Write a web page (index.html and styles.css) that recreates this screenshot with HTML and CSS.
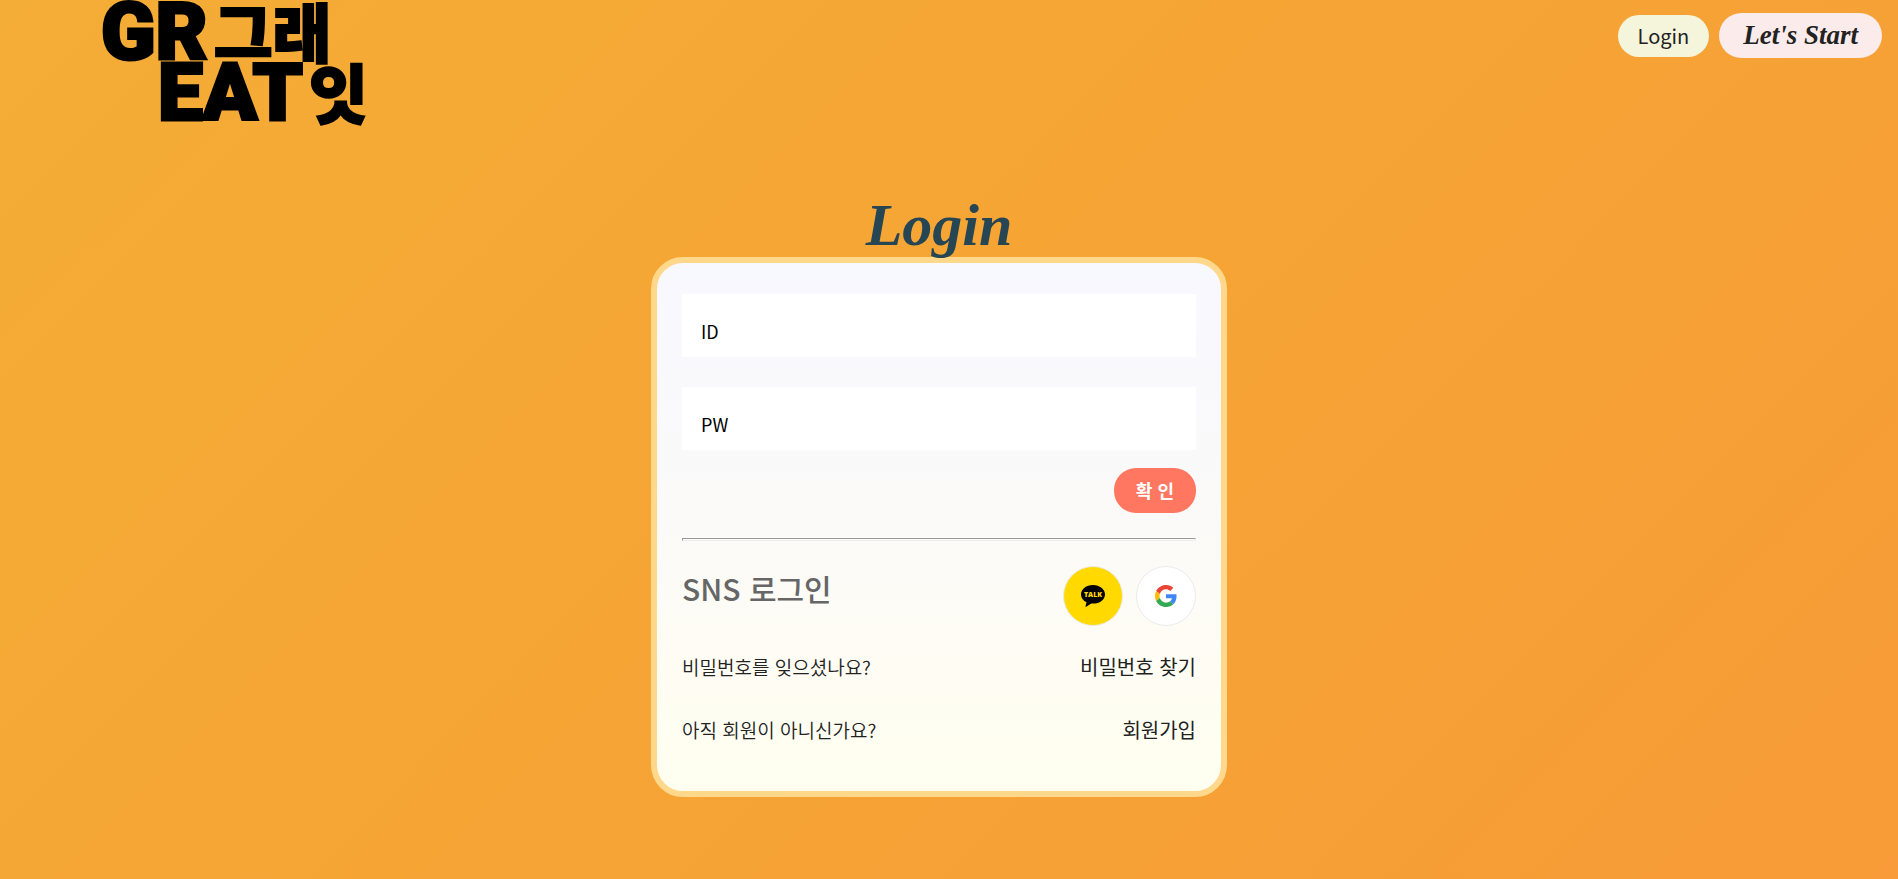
FILE: index.html
```html
<!DOCTYPE html>
<html lang="ko">
<head>
<meta charset="utf-8">
<title>GREAT 그래잇 - Login</title>
<link rel="stylesheet" href="styles.css">
</head>
<body>
<header class="header">
  <a class="logo" href="#" aria-label="GREAT 그래잇">
    <span class="logo-row"><span class="logo-latin">GR</span><span class="logo-hangul">그래</span></span>
    <span class="logo-row logo-row-indent"><span class="logo-latin">EAT</span><span class="logo-hangul">잇</span></span>
  </a>
  <nav class="nav">
    <a class="pill pill-login" href="#">Login</a>
    <a class="pill pill-start" href="#">Let's Start</a>
  </nav>
</header>
<main class="main">
  <h1 class="title">Login</h1>
  <form class="card">
    <div class="field">
      <label class="field-label" for="user-id">ID</label>
      <input class="field-input" id="user-id" type="text">
    </div>
    <div class="field">
      <label class="field-label" for="user-pw">PW</label>
      <input class="field-input" id="user-pw" type="password">
    </div>
    <button class="submit" type="submit">확 인</button>
    <hr class="divider">
    <div class="sns">
      <h2 class="sns-title">SNS 로그인</h2>
      <div class="sns-links">
        <a class="sns-link sns-kakao" href="#" aria-label="Kakao">
          <svg width="24" height="22" viewBox="0 0 24 22">
            <path d="M12 0C5.300 0 0 4.200 0 9.400c0 3.300 2.200 6.300 5.500 7.900L4.500 21.300c-.1.500.3.600.7.400l5.100-3.200c.6.100 1.100.1 1.700.1 6.700 0 12-4.100 12-9.200S18.700 0 12 0z"/>
            <text class="talk" x="12" y="12" text-anchor="middle">TALK</text>
          </svg>
        </a>
        <a class="sns-link sns-google" href="#" aria-label="Google">
          <svg width="22" height="22" viewBox="0 0 48 48">
            <path fill="#ea4335" d="M24 9.500c3.540 0 6.710 1.220 9.210 3.600l6.850-6.850C35.900 2.380 30.470 0 24 0 14.620 0 6.510 5.380 2.560 13.220l7.980 6.190C12.430 13.720 17.740 9.500 24 9.500z"/>
            <path fill="#4285f4" d="M46.980 24.550c0-1.570-.15-3.090-.38-4.550H24v9.020h12.940c-.58 2.960-2.260 5.480-4.780 7.180l7.730 6c4.510-4.180 7.090-10.360 7.090-17.650z"/>
            <path fill="#fbbc05" d="M10.530 28.590A14.500 14.500 0 0 1 9.770 24c0-1.600.27-3.140.76-4.590l-7.980-6.190A23.900 23.900 0 0 0 0 24c0 3.880.92 7.540 2.560 10.780l7.970-6.190z"/>
            <path fill="#34a853" d="M24 48c6.480 0 11.930-2.130 15.890-5.810l-7.730-6c-2.150 1.450-4.920 2.300-8.160 2.300-6.260 0-11.570-4.220-13.470-9.910l-7.980 6.190C6.510 42.620 14.620 48 24 48z"/>
          </svg>
        </a>
      </div>
    </div>
    <div class="help">
      <span class="help-text">비밀번호를 잊으셨나요?</span>
      <a class="help-link" href="#">비밀번호 찾기</a>
    </div>
    <div class="help">
      <span class="help-text">아직 회원이 아니신가요?</span>
      <a class="help-link" href="#">회원가입</a>
    </div>
  </form>
</main>
</body>
</html>
```
FILE: styles.css
```css
* {
  box-sizing: border-box;
}

body {
  margin: 0;
  min-height: 100vh;
  font-family: "Noto Sans CJK KR", sans-serif;
  color: #222;
  background: linear-gradient(135deg, #f4ad36, #f6a535 45%, #f6a036 75%, #f89b38);
}

a {
  color: inherit;
  text-decoration: none;
}

.header {
  display: flex;
  justify-content: space-between;
  align-items: flex-start;
  padding: 0 16px 0 101px;
}

.logo {
  display: flex;
  flex-direction: column;
  padding-top: 2px;
  color: #000;
  font-weight: 900;
  line-height: 61px;
}

.logo-row {
  display: flex;
  align-items: flex-start;
  gap: 6px;
}

.logo-row-indent {
  padding-left: 57px;
}

.logo-latin {
  font-family: Roboto, sans-serif;
  font-size: 80px;
  -webkit-text-stroke: 3px #000;
}

.logo-hangul {
  font-size: 64px;
  line-height: 54px;
  -webkit-text-stroke: 2px #000;
}

.nav {
  display: flex;
  align-items: center;
  gap: 10px;
  padding-top: 13px;
}

.pill {
  border-radius: 24px;
}

.pill-login {
  padding: 6px 20px;
  font-size: 20px;
  font-weight: 400;
  line-height: 30px;
  background: #f5f5dc;
}

.pill-start {
  padding: 6px 24px;
  font-family: "Liberation Serif", serif;
  font-size: 27px;
  font-style: italic;
  font-weight: 700;
  line-height: 33px;
  background: #fbeceb;
}

.main {
  display: flex;
  flex-direction: column;
  align-items: center;
  padding: 61px 20px 60px 0;
}

.title {
  position: relative;
  z-index: 1;
  margin: 0 0 -8px;
  font-family: "Liberation Serif", serif;
  font-size: 60px;
  font-style: italic;
  font-weight: 700;
  line-height: 80px;
  color: #264653;
}

.card {
  display: flex;
  flex-direction: column;
  width: 100%;
  max-width: 576px;
  padding: 31px 25px 46px;
  border: 6px solid #ffd88c;
  border-radius: 32px;
  background: linear-gradient(#f8f8ff, #fbfaf8 50%, #fffdf3 80%, #fffff0);
}

.field {
  position: relative;
  margin-bottom: 30px;
}

.field + .field {
  margin-bottom: 18px;
}

.field-label {
  position: absolute;
  top: 24px;
  left: 19px;
  font-size: 18px;
  line-height: 27px;
  color: #000;
}

.field-input {
  display: block;
  width: 100%;
  height: 63px;
  padding: 20px 19px 8px;
  border: 0;
  font: inherit;
  background: #fff;
}

.submit {
  align-self: flex-end;
  padding: 9px 22px;
  border: 0;
  border-radius: 22px;
  font: inherit;
  font-size: 18px;
  font-weight: 700;
  line-height: 27px;
  color: #fff;
  background: #ff7761;
}

.divider {
  width: 100%;
  height: 3px;
  margin: 25px 0;
  border: 1px solid;
  border-color: #999 #eee #eee #999;
}

.sns {
  display: flex;
  justify-content: space-between;
  align-items: flex-start;
  margin-bottom: 26px;
}

.sns-title {
  margin: 0;
  font-size: 30px;
  font-weight: 500;
  line-height: 44px;
  color: #666;
}

.sns-links {
  display: flex;
  gap: 13px;
}

.sns-link {
  display: flex;
  justify-content: center;
  align-items: center;
  width: 60px;
  height: 60px;
  border: 1px solid #ebebeb;
  border-radius: 50%;
}

.sns-kakao {
  background: #ffd900;
}

.sns-google {
  background: #fff;
}

.talk {
  font-family: "Open Sans", sans-serif;
  font-size: 7px;
  font-weight: 800;
  fill: #ffd900;
}

.help {
  display: flex;
  justify-content: space-between;
  align-items: center;
  margin-bottom: 33px;
  line-height: 30px;
}

.help:last-child {
  margin-bottom: 0;
}

.help-text {
  font-size: 19px;
  font-weight: 350;
}

.help-link {
  font-size: 20px;
}
```
